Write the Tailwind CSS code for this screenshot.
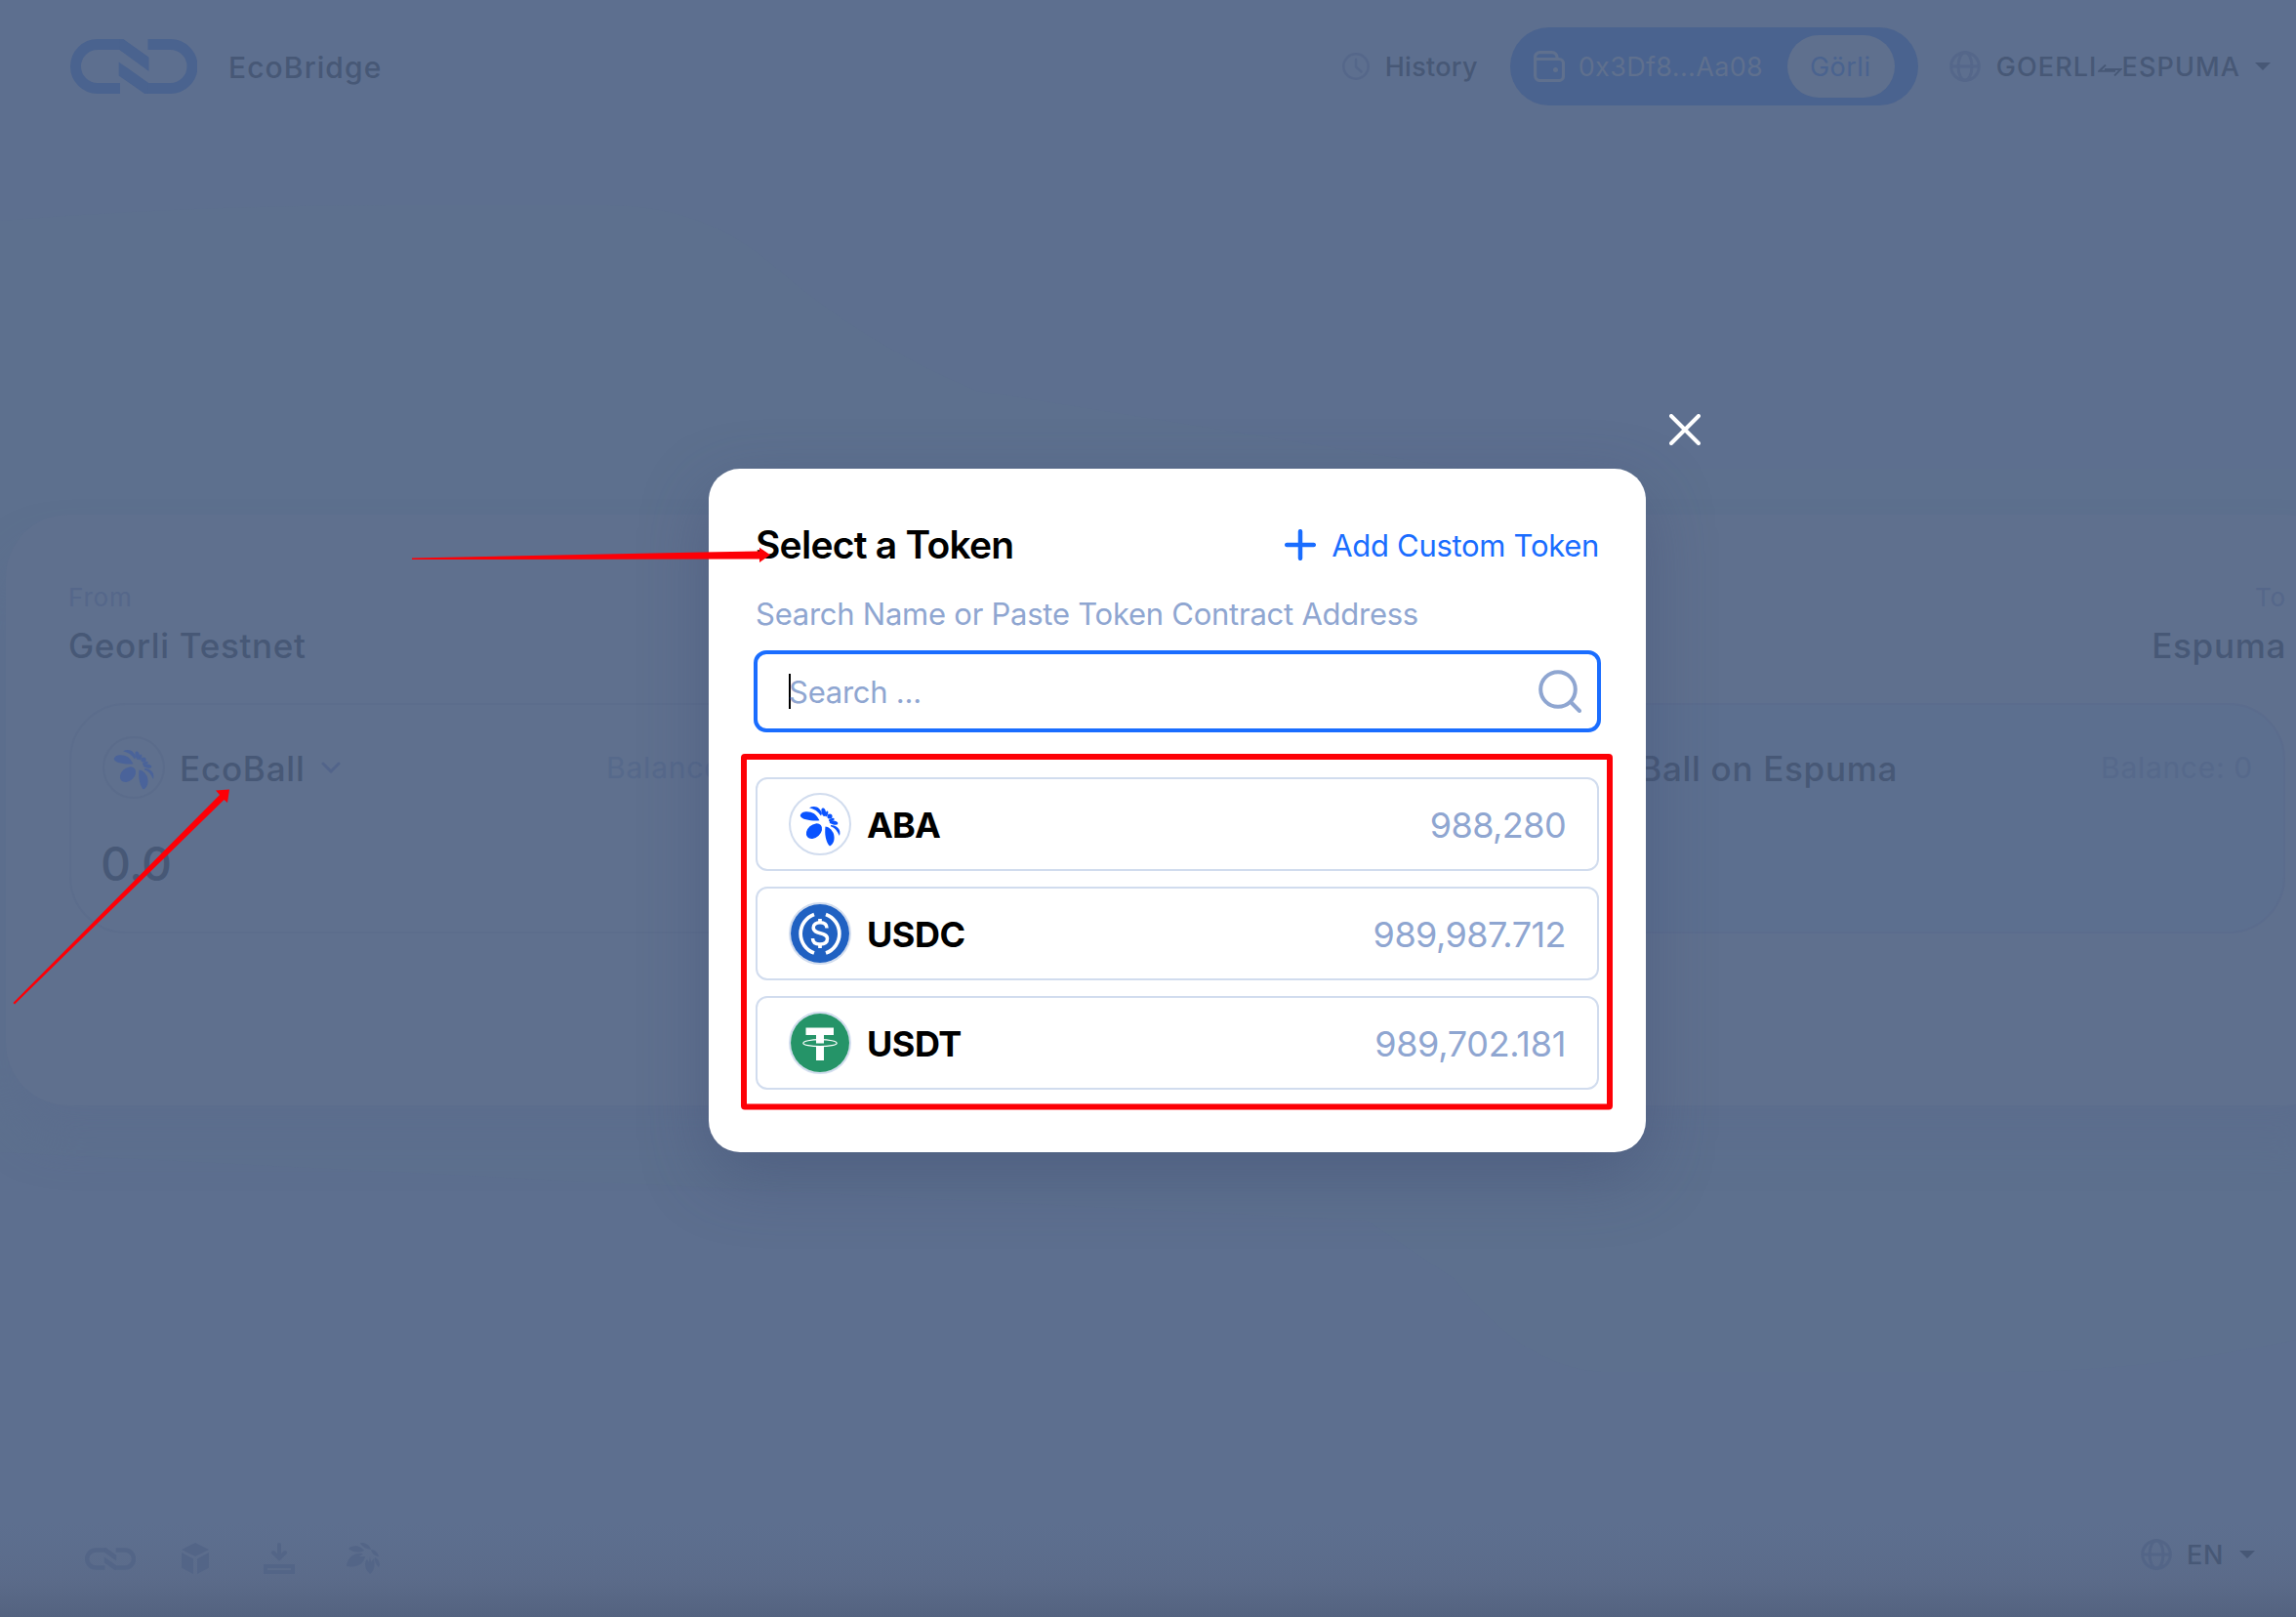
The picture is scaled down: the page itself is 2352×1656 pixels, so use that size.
<!DOCTYPE html>
<html lang="en">
<head>
<meta charset="utf-8">
<title>EcoBridge</title>
<script src="https://cdn.jsdelivr.net/npm/@tailwindcss/browser@4"></script>
</head>
<body class="relative h-[1656px] w-[2352px] overflow-hidden bg-[#5d6f8f] font-['Inter',sans-serif] text-[#475876]">

<svg class="hidden">
  <symbol id="link-logo" viewBox="0 0 130 56">
    <path d="M51 50.500H28a22.500 22.500 0 0 1 0-45H52.500L77 23" fill="none" stroke="currentColor" stroke-width="11"/>
    <path d="M51 0h2.500L80.500 19V33L50.500 11Z" fill="currentColor"/>
    <path d="M79.500 5.500H102.500a22.500 22.500 0 0 1 0 45H78L53.500 33" fill="none" stroke="currentColor" stroke-width="11"/>
    <path d="M79.500 56h-2.500L49.700 37.500V23.500L80 45Z" fill="currentColor"/>
  </symbol>
  <symbol id="globe" viewBox="0 0 32 32">
    <g fill="none" stroke="currentColor" stroke-width="3">
      <circle cx="16" cy="16" r="14.300"/>
      <ellipse cx="16" cy="16" rx="7" ry="14.300"/>
      <path d="M2 16h28"/>
    </g>
  </symbol>
  <symbol id="caret" viewBox="0 0 16 8"><path d="M0 0h16L8 8Z" fill="currentColor"/></symbol>
  <symbol id="petals" viewBox="0 0 64 64">
    <g fill="currentColor">
      <ellipse cx="26" cy="39.200" rx="9.200" ry="6.600" transform="rotate(-42 26 39.200)"/>
      <path d="M11.800 23.500C12 18.500 21 18 26 21.200C29 23.200 30 26 31.500 28.200C26 29 13 28 11.800 23.500Z"/>
      <path d="M37.500 34.500C40.500 34.500 44.500 38 46 42C47.300 47 46.500 52 42 54.500C38 51 36.500 42 37.500 34.500Z"/>
      <path d="M21 15.200C27 12 32.500 15 34 21L33 23.500C30 19 26 16.300 21 15.200Z"/>
      <ellipse cx="35.800" cy="19.700" rx="2.200" ry="4.300" transform="rotate(-14 35.800 19.700)"/>
      <ellipse cx="38.800" cy="21.500" rx="1.300" ry="3" transform="rotate(20 38.800 21.500)"/>
      <circle cx="42" cy="24" r="2.600"/>
      <ellipse cx="43.800" cy="27.500" rx="3" ry="1.400" transform="rotate(-15 43.800 27.500)"/>
      <ellipse cx="46" cy="30.500" rx="4.400" ry="2" transform="rotate(12 46 30.500)"/>
      <path d="M43 33C49 33 54 37 52 44C49.500 39 47.500 36 43 34.300Z"/>
    </g>
  </symbol>
</svg>

<!-- page backdrop shapes -->
<svg class="absolute inset-0 h-full w-full" viewBox="0 0 2352 1656">
  <defs>
    <linearGradient id="fade" x1="0" y1="0" x2="0" y2="1"><stop offset="0" stop-color="#5a6b8a" stop-opacity="0"/><stop offset=".6" stop-color="#5a6987" stop-opacity=".7"/><stop offset="1" stop-color="#53627f"/></linearGradient>
  </defs>
  <path d="M0 226Q200 210 400 210H620Q720 210 790 270Q880 350 1000 400L1500 480H2352V1372Q2200 1405 2050 1405H1640Q1560 1400 1490 1310L1400 1250L0 1180Z" fill="#5d708e"/>
  <rect x="0" y="1560" width="2352" height="96" fill="url(#fade)"/>
</svg>

<div class="relative flex h-full flex-col">
  <header class="flex h-[136px] items-center pr-[26px] pl-[72px]">
    <svg class="h-14 w-[130px] text-[#4a638f]"><use href="#link-logo"/></svg>
    <span class="mt-[2px] ml-8 text-[30px] leading-9 font-medium tracking-[1.1px]">EcoBridge</span>
    <div class="ml-auto flex items-center">
      <svg class="size-7 text-[#55678a]" viewBox="0 0 28 28" fill="none" stroke="currentColor" stroke-width="2.500"><circle cx="14" cy="14" r="12.700"/><path d="M14 7v7.500l5.500 5" stroke-linecap="round"/></svg>
      <span class="mt-[2px] ml-4 w-[95px] text-[27px] leading-9 font-medium tracking-[0.3px] whitespace-nowrap">History</span>
      <div class="ml-[33px] flex h-20 w-[418px] items-center rounded-full bg-[#4a638f] pr-6 pl-6 text-[#5f708e]">
        <svg class="size-8" viewBox="0 0 32 32" fill="none" stroke="currentColor" stroke-width="3.200"><path d="M1.600 9V7a5 5 0 0 1 5-5.400H19a5 5 0 0 1 5 5V9M1.600 8.500H26a4.500 4.500 0 0 1 4.500 4.500V26a4.500 4.500 0 0 1-4.500 4.500H6.600a5 5 0 0 1-5-5Z"/><circle cx="22.500" cy="19.500" r="2.500" fill="currentColor" stroke="none"/></svg>
        <span class="mt-[2px] ml-[14px] text-[27px] leading-9 tracking-[0.35px] whitespace-nowrap">0x3Df8...Aa08</span>
        <span class="ml-auto flex h-16 w-[110px] items-center justify-center rounded-full bg-[#5f708e] pt-[2px] pr-px text-[27px] tracking-[0.5px] text-[#4a638f]">Görli</span>
      </div>
      <svg class="ml-8 size-8 text-[#55678a]"><use href="#globe"/></svg>
      <span class="mt-[2px] ml-4 flex items-center text-[27px] leading-9 font-medium tracking-[1.1px] whitespace-nowrap">GOERLI<svg class="mt-[5px] h-3 w-[25px]" viewBox="0 0 25 12" fill="none" stroke="currentColor" stroke-width="1.900"><path d="M8 .5 1.500 6.700H18M17 11.500 23.500 5H7"/></svg>ESPUMA</span>
      <svg class="ml-[15px] h-2 w-4"><use href="#caret"/></svg>
    </div>
  </header>

  <main class="mt-[391px] ml-[6px] h-[605px] w-[2400px] rounded-[64px] bg-[#5f708e] px-[65px] pt-[68px] shadow-[0_36px_44px_#5b6b8e80]">
    <div class="flex justify-between">
      <div class="-ml-[1px]">
        <div class="h-[34px] text-[26px] leading-[34px] font-normal tracking-[0.8px] text-[#55678a]">From</div>
        <div class="mt-[10px] h-11 text-[35px] leading-[44px] font-medium tracking-[0.7px]">Georli Testnet</div>
      </div>
      <div class="-mr-[1px] text-right">
        <div class="h-[34px] text-[26px] leading-[34px] font-normal tracking-[0.8px] text-[#55678a]">To</div>
        <div class="mt-[10px] h-11 text-[35px] leading-[44px] font-medium tracking-[0.7px]">Espuma</div>
      </div>
    </div>
    <div class="mt-[37px] flex justify-between">
      <section class="h-[236px] w-[740px] rounded-[58px] border-2 border-[#5c6d8c] px-8 pt-8">
        <div class="flex items-center">
          <div class="flex size-16 shrink-0 items-center justify-center rounded-full border-2 border-[#5b6c8b]"><svg class="size-16 shrink-0 text-[#4a639a]"><use href="#petals"/></svg></div>
          <span class="mt-[2px] ml-[15px] text-[35px] leading-[44px] font-medium tracking-[0.8px]">EcoBall</span>
          <svg class="ml-[16px] h-3 w-5 text-[#52648a]" viewBox="0 0 20 12" fill="none" stroke="currentColor" stroke-width="3"><path d="m2 2 8 8 8-8" stroke-linecap="round"/></svg>
          <span class="mt-px -mr-px ml-auto text-[30px] tracking-[0.8px] text-[#56698b]">Balance: 0</span>
        </div>
        <div class="mt-[37px] -ml-[2px] text-[48px] leading-[60px] font-medium tracking-[-0.5px]">0.0</div>
      </section>
      <section class="h-[236px] w-[770px] rounded-[58px] border-2 border-[#5b6c8d] bg-[#5c6f8f] px-8 pt-8">
        <div class="flex h-16 items-center">
          <span class="mt-[2px] flex w-[339px] justify-end text-[35px] leading-[44px] font-medium tracking-[0.7px] whitespace-nowrap">EcoBall on Espuma</span>
          <span class="mt-px -mr-px ml-auto text-[30px] tracking-[0.7px] text-[#56698b]">Balance: 0</span>
        </div>
      </section>
    </div>
  </main>

  <footer class="mt-auto flex h-[128px] items-center pr-[42px] pl-[87px] text-[#536587]">
    <div class="flex w-full items-center">
      <div class="flex items-center pt-2">
        <svg class="h-[23px] w-[52px]"><use href="#link-logo"/></svg>
        <svg class="ml-[47px] h-8 w-7" viewBox="0 0 28 32" fill="currentColor"><path d="M14 0 28 7 14 14 0 7ZM0 10l12 6.500V32L0 25.500ZM28 10 16 16.500V32l12-6.500Z"/></svg>
        <svg class="ml-14 size-8" viewBox="0 0 32 32" fill="none" stroke="currentColor" stroke-width="4"><path d="M16 2v13M10 10l6 6 6-6" stroke-linecap="round"/><rect x="2" y="24" width="28" height="6"/></svg>
        <svg class="ml-[53px] h-8 w-[34px]" viewBox="0 0 34 32" fill="currentColor"><path d="M0 24C0 16 8 9 17 11L13 14 19 14C18 20 13 26 0 24ZM2 6C6 2 14 2 18 8 12 11 5 9 2 6ZM14 0C19-1 24 3 25 7 20 6 16 4 14 0ZM25 7C29 7 32 10 33 14 29 14 26 11 25 7ZM24 32C18 27 18 20 21 17L23 20 24 14 25 20 28 16C29 23 29 28 24 32ZM29 15C34 18 35 22 33 25 30 22 28 18 29 15Z"/></svg>
      </div>
      <svg class="ml-auto size-8"><use href="#globe"/></svg>
      <span class="mt-[2px] ml-[15px] text-[27px] leading-9 font-medium tracking-[0.6px] text-[#475876]">EN</span>
      <svg class="ml-4 h-2 w-4 text-[#475876]"><use href="#caret"/></svg>
    </div>
  </footer>
</div>

<!-- token dialog -->
<div class="absolute inset-0 flex flex-col items-center pt-[424px] pl-[60px]">
  <div class="flex h-14 w-[1072px] justify-end">
    <svg class="size-8" viewBox="0 0 32 32" stroke="#fff" stroke-width="4" stroke-linecap="round"><path d="m2 2 28 28M30 2 2 30"/></svg>
  </div>
  <div class="h-[700px] w-[960px] rounded-[32px] bg-white px-12 pt-12 shadow-[0_24px_68px_#3d4a7068]">
    <div class="flex h-[60px] items-center justify-between">
      <h1 class="text-[39px] font-semibold tracking-[-0.75px] whitespace-nowrap text-black">Select a Token</h1>
      <div class="flex items-center text-[31px] tracking-[-0.3px] whitespace-nowrap text-[#1a6dff]">
        <svg class="mr-4 size-8" viewBox="0 0 32 32" stroke="currentColor" stroke-width="4.500" stroke-linecap="round"><path d="M16 2.200v27.600M2.200 16h27.600"/></svg>
        <span class="mt-[2px]">Add Custom Token</span>
      </div>
    </div>
    <p class="mt-[21px] h-10 text-[31px] leading-10 tracking-[-0.25px] whitespace-nowrap text-[#8fa6d1]">Search Name or Paste Token Contract Address</p>
    <div class="-mx-[2px] mt-[17px] flex h-[84px] items-center rounded-[13px] border-4 border-[#1a6dff] pr-4 pl-8">
      <span class="h-9 w-[2px] bg-black"></span>
      <span class="mt-[2px] -ml-[2px] text-[31px] tracking-[-0.25px] text-[#8fa6d1]">Search ...</span>
      <svg class="ml-auto size-11" viewBox="0 0 44 44" fill="none" stroke="#8fa6d1" stroke-width="4" stroke-linecap="round"><circle cx="20" cy="20" r="17.800"/><path d="m33 33 9 9"/></svg>
    </div>
    <div class="mt-[46px] flex flex-col gap-4">
      <div class="flex h-24 items-center rounded-xl border-2 border-[#d1dcee] pr-8 pl-8">
        <div class="flex size-16 items-center justify-center rounded-full border-2 border-[#d1dcee]"><svg class="size-16 shrink-0 text-[#0a53ff]"><use href="#petals"/></svg></div>
        <span class="mt-[2px] ml-4 text-[36px] font-bold tracking-[-0.9px] text-black">ABA</span>
        <span class="mt-[2px] ml-auto text-[36px] tracking-[-0.6px] text-[#8fa6d1]">988,280</span>
      </div>
      <div class="flex h-24 items-center rounded-xl border-2 border-[#d1dcee] pr-8 pl-8">
        <div class="size-16 rounded-full border-2 border-[#d1dcee]">
          <svg class="size-[60px]" viewBox="0 0 60 60" fill="none" stroke="#fff"><circle cx="30" cy="30" r="30" fill="#2061c2" stroke="none"/><path d="M24 10.500a21 21 0 0 0 0 39.500M36 10.500a21 21 0 0 1 0 39.500" stroke-width="3.700"/><path d="M37 24.500c0-4-3-5.800-7-5.800s-6.800 2-6.800 5.300c0 7.500 14.300 4 14.300 11.300 0 3.700-3 5.700-7.500 5.700s-7.500-2-7.500-6" stroke-width="3.500"/><path d="M30 15v4M30 41v4" stroke-width="3.700"/></svg>
        </div>
        <span class="mt-[2px] ml-4 text-[36px] font-bold tracking-[-0.5px] text-black">USDC</span>
        <span class="mt-[2px] ml-auto text-[36px] tracking-[-0.55px] text-[#8fa6d1]">989,987.712</span>
      </div>
      <div class="flex h-24 items-center rounded-xl border-2 border-[#d1dcee] pr-8 pl-8">
        <div class="size-16 rounded-full border-2 border-[#d1dcee]">
          <svg class="size-[60px]" viewBox="0 0 60 60"><circle cx="30" cy="30" r="30" fill="#259468"/><path d="M15.500 14.500h28.500v7.500H34V30.500H26V22H15.500ZM26 33.500H34V48H26Z" fill="#fff"/><ellipse cx="30" cy="30.200" rx="17.200" ry="3.500" fill="none" stroke="#fff" stroke-width="1.200"/></svg>
        </div>
        <span class="mt-[2px] ml-4 text-[36px] font-bold tracking-[-0.5px] text-black">USDT</span>
        <span class="mt-[2px] ml-auto text-[36px] tracking-[-0.3px] text-[#8fa6d1]">989,702.181</span>
      </div>
    </div>
  </div>
</div>

<!-- callouts -->
<svg class="absolute inset-0 h-full w-full" viewBox="0 0 2352 1656">
  <g fill="#fd0006">
    <path d="M422 571.500 720 565.500 778 564.500V560.700L789 568.300 778 576V572.500L422 573Z"/>
    <path d="M13.500 1027 225 814 221 809.500 235 808.500 233 822 229.500 819 15 1028.500Z"/>
  </g>
  <rect x="762" y="775" width="887" height="358.500" rx="1" fill="none" stroke="#fd0006" stroke-width="6"/>
</svg>
</body>
</html>
